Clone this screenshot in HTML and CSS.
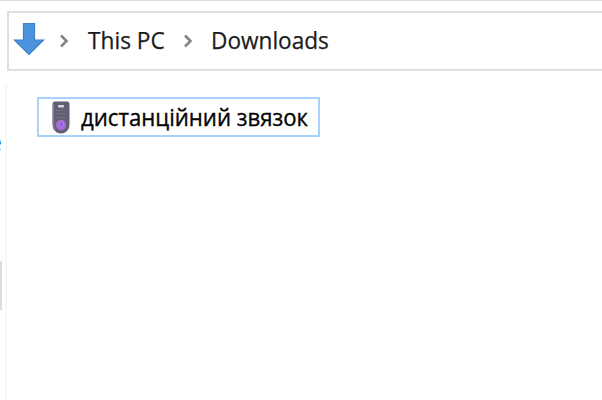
FILE: index.html
```html
<!DOCTYPE html>
<html lang="uk">
<head>
<meta charset="utf-8">
<title>Downloads</title>
<link rel="stylesheet" href="styles.css">
</head>
<body>
<div class="window">
  <nav class="address">
    <svg class="arrow" width="32" height="34" viewBox="0 0 32 34"><path d="M10.500 1.500h11v16.500h9L16 32.500 1.500 18h9z" fill="#4d94df" stroke="#3c7fc9" stroke-width="1.200"/></svg>
    <svg class="chevron" width="10" height="14" viewBox="0 0 10 14"><path d="M2 1.500 7.500 7 2 12.500"/></svg>
    <span class="crumb pc">This PC</span>
    <svg class="chevron second" width="10" height="14" viewBox="0 0 10 14"><path d="M2 1.500 7.500 7 2 12.500"/></svg>
    <span class="crumb downloads">Downloads</span>
  </nav>
  <div class="body">
    <aside class="sidebar">
      <span class="clipped">e</span>
      <span class="thumb"></span>
    </aside>
    <main class="files">
      <div class="file">
        <svg class="remote" width="18" height="33" viewBox="0 0 18 33">
          <path d="M3 .5h12q2.500 0 2.500 3V23q0 6-4 8.200Q9 34 4.500 31.200.5 29 .5 23V3.500Q.5.500 3 .500z" fill="#625f72"/>
          <path d="M1.500 3v20q0 4 2 6" fill="none" stroke="#7d7990" stroke-width="1.500"/>
          <rect x="6" y="4" width="6" height="2.500" rx="1" fill="#d8d7df"/>
          <path d="M4 9.500h10M4 13h10M4 16.500h10" stroke="#77758a" stroke-width="1.200" stroke-dasharray="2.600 1"/>
          <circle cx="9" cy="24" r="5.200" fill="#a66bd2"/>
          <circle cx="9.500" cy="23.500" r="2.300" fill="#8660e8" stroke="#c37cec"/>
        </svg>
        <span class="name">дистанційний звязок</span>
      </div>
    </main>
  </div>
</div>
</body>
</html>
```
FILE: styles.css
```css
* { box-sizing: border-box; }
body {
  margin: 0;
  background: #fff;
  color: #1c1c1c;
  font-family: "Open Sans", "Noto Sans", sans-serif;
}
.window {
  display: flex;
  flex-direction: column;
  width: 602px;
  height: 400px;
  overflow: hidden;
  border-top: 1px solid #dedede;
}
.address {
  display: flex;
  align-items: center;
  flex: none;
  height: 60px;
  margin: 10px 0 0 7px;
  padding-left: 4px;
  border: 2px solid #dedede;
  border-right: 0;
}
.arrow { flex: none; margin-top: -4px; }
.chevron {
  flex: none;
  margin-left: 14px;
  fill: none;
  stroke: #858585;
  stroke-width: 2.6;
}
.crumb {
  flex: none;
  margin-bottom: 2px;
  font-size: 24px;
  line-height: 32px;
  white-space: nowrap;
  transform-origin: left center;
  -webkit-text-stroke: 0.25px currentColor;
}
.pc { width: 77px; margin-left: 19px; transform: scaleX(0.945); }
.second { margin-left: 18px; }
.downloads { margin-left: 18px; transform: scaleX(0.942); }
.body { display: flex; flex: 1; padding-top: 14px; }
.sidebar {
  display: flex;
  flex-direction: column;
  width: 7px;
  border-right: 2px solid #f7f7f7;
}
.clipped {
  display: flex;
  justify-content: flex-end;
  width: 2px;
  height: 32px;
  margin-top: 41px;
  overflow: hidden;
  color: #1a73d9;
  font-size: 23px;
  line-height: 32px;
}
.thumb {
  width: 2px;
  height: 49px;
  margin-top: 103px;
  background: #dcdcdc;
}
.files { padding: 12px 0 0 30px; }
.file {
  display: flex;
  align-items: center;
  width: 283px;
  height: 40px;
  padding-left: 13px;
  border: 2px solid #a8d2fb;
}
.remote { flex: none; }
.name {
  margin: 0 0 1px 11px;
  color: #050505;
  font-size: 23px;
  line-height: 32px;
  white-space: nowrap;
  transform: scaleX(0.964);
  transform-origin: left center;
  -webkit-text-stroke: 0.35px currentColor;
}
```
